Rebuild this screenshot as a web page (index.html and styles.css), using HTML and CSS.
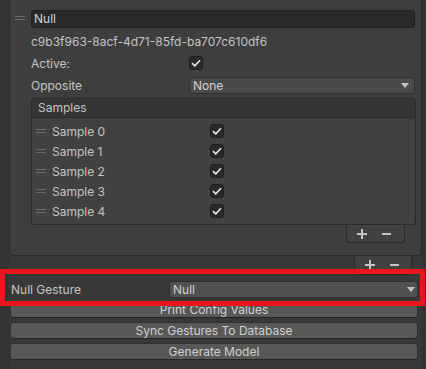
FILE: index.html
```html
<!DOCTYPE html>
<html lang="en">
<head>
    <meta charset="UTF-8">
    <title>Gesture Config Inspector</title>
    <link rel="stylesheet" href="styles.css">
</head>
<body>
    <div class="inspector">
        <!-- Gesture list -->
        <div class="list">
            <div class="item">
                <span class="handle"></span>
                <div class="item-body">
                    <div class="textfield">Null</div>
                    <div class="field guid">c9b3f963-8acf-4d71-85fd-ba707c610df6</div>
                    <div class="field">
                        <span class="label">Active:</span>
                        <span class="check">
                            <svg width="10" height="8" viewBox="0 0 10 8"><path d="M1 4.2 L3.8 6.8 L9 1.2" fill="none" stroke="#e6e6e6" stroke-width="1.6"/></svg>
                        </span>
                    </div>
                    <div class="field">
                        <span class="label">Opposite</span>
                        <div class="dropdown dark">
                            <span>None</span>
                            <svg class="arrow" width="8" height="5" viewBox="0 0 8 5"><path d="M0 0 H8 L4 5 Z" fill="#c4c4c4"/></svg>
                        </div>
                    </div>

                    <!-- Samples sub list -->
                    <div class="samples">
                        <div class="samples-header">Samples</div>
                        <div class="samples-body" id="samples"></div>
                    </div>
                    <div class="footer inner-footer">
                        <span class="btn-icon"><svg width="10" height="10" viewBox="0 0 10 10"><path d="M5 0 V10 M0 5 H10" stroke="#c4c4c4" stroke-width="2"/></svg></span>
                        <span class="btn-icon"><svg width="9" height="2" viewBox="0 0 9 2"><path d="M0 1 H9" stroke="#c4c4c4" stroke-width="2"/></svg></span>
                    </div>
                </div>
            </div>
        </div>
        <div class="footer outer-footer">
            <span class="btn-icon"><svg width="10" height="10" viewBox="0 0 10 10"><path d="M5 0 V10 M0 5 H10" stroke="#c4c4c4" stroke-width="2"/></svg></span>
            <span class="btn-icon"><svg width="9" height="2" viewBox="0 0 9 2"><path d="M0 1 H9" stroke="#c4c4c4" stroke-width="2"/></svg></span>
        </div>

        <div class="bottom">
            <div class="gesture-row">
                <span class="gesture-label">Null Gesture</span>
                <div class="dropdown">
                    <span>Null</span>
                    <svg class="arrow" width="8" height="5" viewBox="0 0 8 5"><path d="M0 0 H8 L4 5 Z" fill="#c4c4c4"/></svg>
                </div>
            </div>
            <button class="button">Print Config Values</button>
            <button class="button">Sync Gestures To Database</button>
            <button class="button">Generate Model</button>
        </div>
    </div>

    <div class="highlight"></div>

    <script>
        const samples = document.getElementById('samples');
        for (let i = 0; i < 5; i++) {
            const row = document.createElement('div');
            row.classList.add('sample-row');
            row.innerHTML = `
                <span class="handle small"></span>
                <span class="sample-label">Sample ${i}</span>
                <span class="check">
                    <svg width="10" height="8" viewBox="0 0 10 8"><path d="M1 4.2 L3.8 6.8 L9 1.2" fill="none" stroke="#e6e6e6" stroke-width="1.6"/></svg>
                </span>
            `;
            samples.appendChild(row);
        }
    </script>
</body>
</html>
```

FILE: styles.css
```css
body {
    margin: 0;
    background-color: #333333;
    font-family: Inter, "Noto Sans", sans-serif;
    font-size: 12px;
    color: #c4c4c4;
    position: relative;
    height: 369px;
    overflow: hidden;
}

.inspector {
    margin-left: 9px;
    width: 413px;
    height: 369px;
    background-color: #383838;
    display: flex;
    flex-direction: column;
}

.list {
    background-color: #3e3e3e;
    border: 1px solid #2a2a2a;
    border-top: none;
    border-radius: 0 0 4px 4px;
    padding: 10px 5px 12px 0;
}

.item {
    display: flex;
}

.handle {
    width: 10px;
    height: 2px;
    border-top: 1px solid #6a6a6a;
    border-bottom: 1px solid #6a6a6a;
    margin: 6px 6px 0 5px;
    flex-shrink: 0;
}

.item-body {
    flex: 1;
    display: flex;
    flex-direction: column;
}

.textfield {
    height: 16px;
    line-height: 16px;
    background-color: #2a2a2a;
    border: 1px solid #212121;
    border-radius: 3px;
    padding: 0 2px;
    margin-right: 1px;
    color: #d2d2d2;
}

.field {
    height: 18px;
    margin-top: 4px;
    display: flex;
    align-items: center;
}

.label {
    width: 158px;
    flex-shrink: 0;
}

.check {
    width: 12px;
    height: 12px;
    background-color: #2a2a2a;
    border: 1px solid #1f1f1f;
    border-radius: 3px;
    display: flex;
    align-items: center;
    justify-content: center;
}

.dropdown {
    flex: 1;
    height: 15px;
    line-height: 15px;
    background-color: #515151;
    border: 1px solid #303030;
    border-radius: 3px;
    padding: 0 5px 0 3px;
    display: flex;
    justify-content: space-between;
    align-items: center;
    color: #d2d2d2;
}

.dropdown.dark {
    background-color: #4a4a4a;
    margin-right: 1px;
}

.samples {
    margin-top: 4px;
}

.samples-header {
    height: 18px;
    line-height: 18px;
    background-color: #353535;
    border: 1px solid #2a2a2a;
    border-radius: 3px 3px 0 0;
    padding-left: 6px;
}

.samples-body {
    background-color: #414141;
    border: 1px solid #2a2a2a;
    border-top: none;
    border-radius: 0 0 3px 3px;
    padding: 3px 0;
}

.sample-row {
    height: 20px;
    display: flex;
    align-items: center;
}

.handle.small {
    margin: 0 6px 0 4px;
}

.sample-label {
    width: 158px;
}

.footer {
    align-self: flex-end;
    display: flex;
    padding-left: 3px;
    background-color: #414141;
    border: 1px solid #2a2a2a;
    border-top: none;
    border-radius: 0 0 4px 4px;
}

.inner-footer {
    width: 54px;
    height: 17px;
    margin-right: 11px;
}

.outer-footer {
    width: 53px;
    height: 18px;
    margin-right: 10px;
}

.btn-icon {
    width: 24px;
    display: flex;
    align-items: center;
    justify-content: center;
}

.bottom {
    margin-left: 1px;
    width: 408px;
    display: flex;
    flex-direction: column;
}

.gesture-row {
    height: 20px;
    margin-top: 4px;
    display: flex;
    align-items: center;
}

.gesture-label {
    width: 158px;
    padding-left: 1px;
}

.gesture-row .dropdown {
    padding-right: 2px;
}

.button {
    height: 17px;
    margin-top: 2px;
    margin-bottom: 2px;
    background-color: #585858;
    border: 1px solid #303030;
    border-bottom-color: #242424;
    border-radius: 3px;
    font-family: Inter, "Noto Sans", sans-serif;
    font-size: 12px;
    line-height: 15px;
    color: #d0d0d0;
    padding: 0;
}

.button + .button {
    margin-top: 2px;
}

.highlight {
    position: absolute;
    left: 0;
    top: 269px;
    width: 425px;
    height: 37px;
    border: 5px solid #e8171f;
    box-sizing: border-box;
}
```
